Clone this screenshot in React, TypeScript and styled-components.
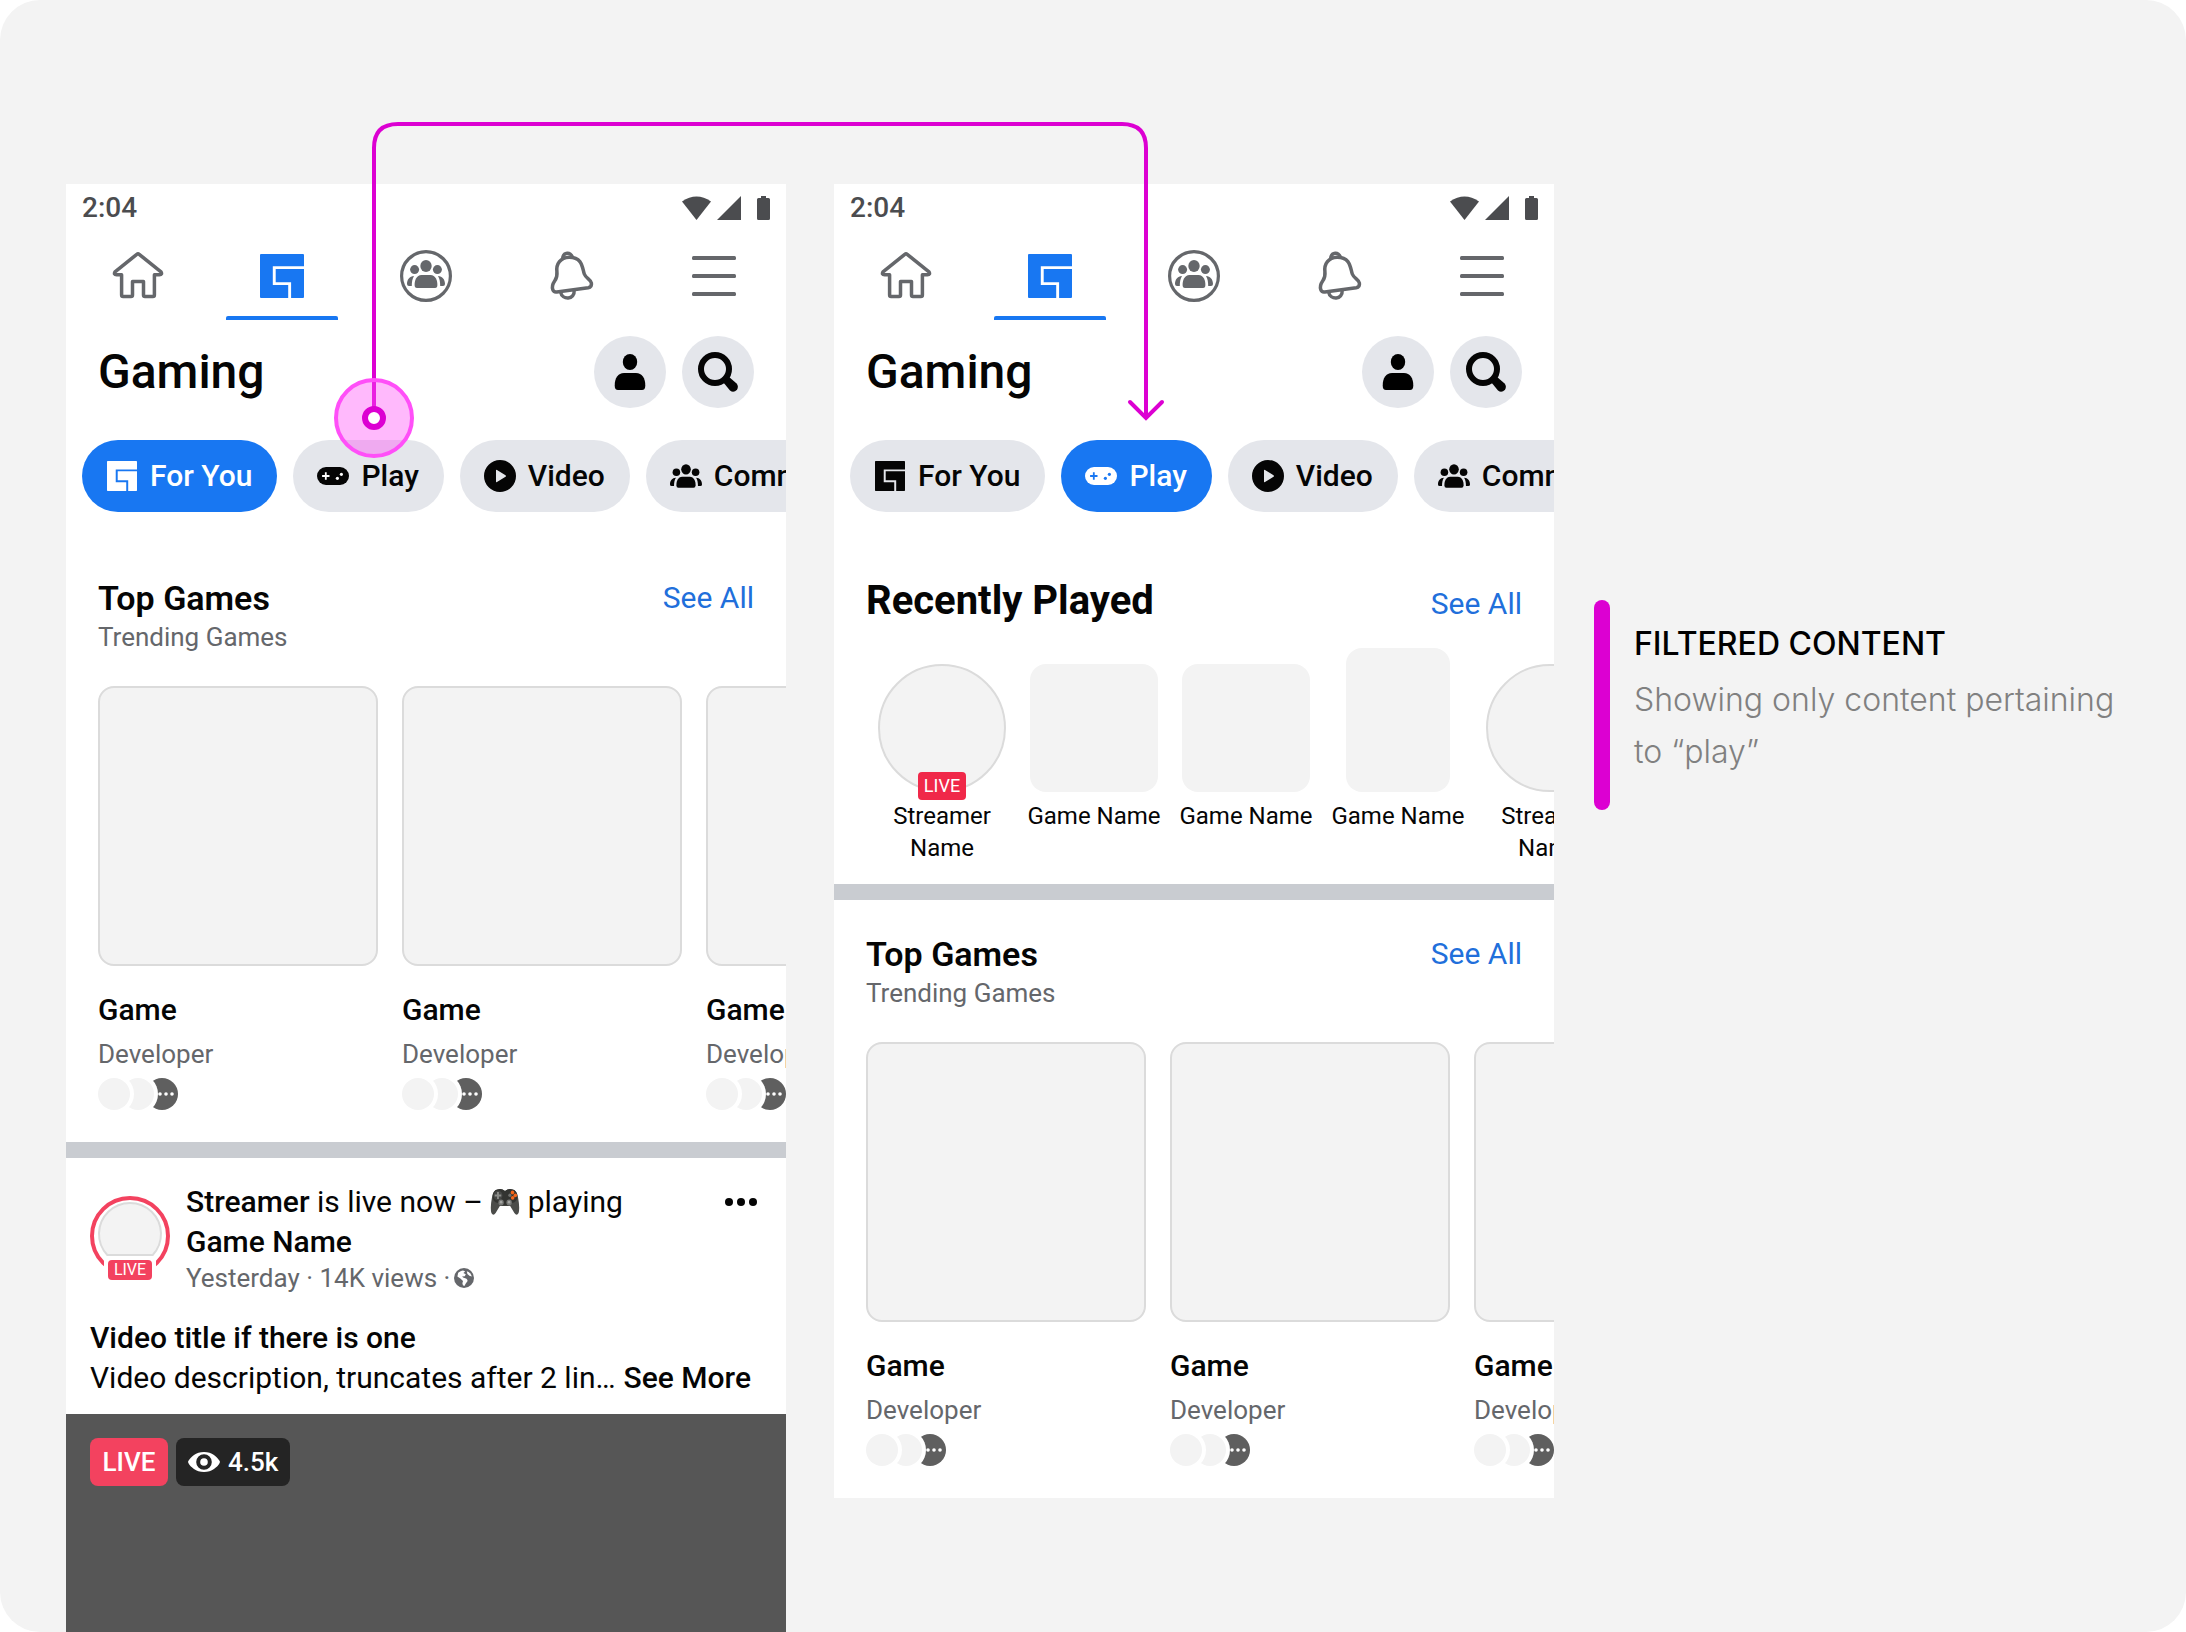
import React from "react";
import styled, { createGlobalStyle } from "styled-components";

const color = {
  board: "#f3f3f3",
  ink: "#050505",
  muted: "#65676b",
  status: "#4b4c4f",
  chip: "#e4e6eb",
  blue: "#1877f2",
  link: "#216fdb",
  live: "#f3425f",
  liveDeep: "#f02849",
  outline: "#dbdbdb",
  divider: "#c9ccd1",
  flow: "#dc00d2",
};

const Global = createGlobalStyle`
  *, *::before, *::after { box-sizing: border-box; }
  body { margin: 0; background: #ffffff; font-family: Roboto, "Liberation Sans", sans-serif; color: ${color.ink}; }
  h2, h3, h4, p, ul { margin: 0; padding: 0; }
  ul { list-style: none; }
  button { font: inherit; color: inherit; border: 0; padding: 0; background: none; cursor: pointer; }
  a { text-decoration: none; }
  svg { display: block; flex: none; }
`;

const Board = styled.main`
  position: relative;
  display: flex;
  align-items: flex-start;
  min-height: 100vh;
  padding: 184px 48px 0 66px;
  overflow: hidden;
  background: ${color.board};
  border-radius: 40px;
`;

const Phone = styled.section<{ $fill?: boolean }>`
  display: flex;
  flex-direction: column;
  flex: 0 1 720px;
  min-width: 0;
  align-self: ${(p) => (p.$fill ? "stretch" : "flex-start")};
  min-height: ${(p) => (p.$fill ? "calc(100vh - 184px)" : "0")};
  overflow: hidden;
  background: #ffffff;
  & + & { margin-left: 48px; }
`;

const StatusBar = styled.div`
  display: flex;
  align-items: center;
  justify-content: space-between;
  height: 48px;
  padding: 0 16px;
  color: ${color.status};
  font-size: 28px;
  font-weight: 500;
  line-height: 48px;
`;

const Tabs = styled.nav`
  display: grid;
  grid-template-columns: repeat(5, 1fr);
  height: 88px;
`;

const Tab = styled.button<{ $active?: boolean }>`
  display: grid;
  grid-template-rows: 84px 4px;
  justify-items: center;
  align-items: center;
  color: ${(p) => (p.$active ? color.blue : color.muted)};
  & > svg { margin-top: 4px; }
`;

const TabMarker = styled.span`
  width: 112px;
  height: 4px;
  background: ${color.blue};
  border-radius: 2px 2px 0 0;
`;

const TitleRow = styled.header`
  display: flex;
  align-items: center;
  gap: 16px;
  padding: 16px 32px;
`;

const PageTitle = styled.h2`
  flex: 1;
  font-size: 48px;
  font-weight: 500;
  line-height: 72px;
`;

const RoundButton = styled.button`
  display: grid;
  place-items: center;
  width: 72px;
  height: 72px;
  border-radius: 50%;
  background: ${color.chip};
`;

const Pills = styled.div`
  display: flex;
  gap: 16px;
  padding: 16px 16px 32px;
  overflow: hidden;
`;

const Pill = styled.button<{ $active?: boolean }>`
  display: flex;
  flex: none;
  align-items: center;
  gap: 12px;
  height: 72px;
  padding: 0 25px 0 24px;
  border-radius: 36px;
  background: ${(p) => (p.$active ? color.blue : color.chip)};
  color: ${(p) => (p.$active ? "#ffffff" : color.ink)};
  font-size: 30px;
  font-weight: 500;
  line-height: 40px;
  white-space: nowrap;
`;

const Section = styled.section`
  padding: 32px 0 32px 32px;
  overflow: hidden;
`;

const RecentSection = styled(Section)`
  padding-bottom: 20px;
`;

const SectionHead = styled.div<{ $align: string }>`
  display: flex;
  align-items: ${(p) => p.$align};
  justify-content: space-between;
  padding-right: 32px;
`;

const SectionTitle = styled.h3`
  font-size: 34px;
  font-weight: 600;
  line-height: 44px;
`;

const LargeTitle = styled(SectionTitle)`
  font-size: 40px;
  font-weight: 700;
  line-height: 50px;
`;

const SeeAll = styled.a`
  color: ${color.link};
  font-size: 30px;
  line-height: 40px;
`;

const Subtitle = styled.p`
  color: ${color.muted};
  font-size: 26px;
  line-height: 34px;
`;

const Shelf = styled.ul`
  display: flex;
  gap: 24px;
  margin-top: 32px;
`;

const GameCard = styled.li`
  flex: none;
  width: 280px;
`;

const Cover = styled.div`
  height: 280px;
  margin-bottom: 24px;
  border: 2px solid ${color.outline};
  border-radius: 16px;
  background: ${color.board};
`;

const GameName = styled.h4`
  margin-bottom: 4px;
  font-size: 30px;
  font-weight: 500;
  line-height: 40px;
`;

const Developer = styled.p`
  margin-bottom: 4px;
  color: ${color.muted};
  font-size: 26px;
  line-height: 40px;
`;

const Friends = styled.div`
  display: flex;
`;

const Friend = styled.span<{ $level: number; $dark?: boolean }>`
  z-index: ${(p) => p.$level};
  width: 32px;
  height: 32px;
  border-radius: 50%;
  background: ${(p) => (p.$dark ? "#5f5f5f" : color.board)};
  box-shadow: 0 0 0 4px #ffffff;
  & + & { margin-left: -8px; }
`;

const Divider = styled.div`
  flex: none;
  height: 16px;
  background: ${color.divider};
`;

const RecentShelf = styled.ul`
  display: flex;
  margin-top: 22px;
`;

const RecentItem = styled.li`
  display: flex;
  flex: none;
  flex-direction: column;
  align-items: center;
  width: 152px;
`;

const RecentArt = styled.div`
  position: relative;
  display: flex;
  align-items: flex-end;
  height: 144px;
  margin-bottom: 8px;
`;

const Thumb = styled.div<{ $shape: string }>`
  width: ${(p) => (p.$shape === "tall" ? 104 : 128)}px;
  height: ${(p) => (p.$shape === "tall" ? 144 : 128)}px;
  border: ${(p) => (p.$shape === "round" ? `2px solid ${color.outline}` : "0")};
  border-radius: ${(p) => (p.$shape === "round" ? "50%" : "16px")};
  background: ${color.board};
`;

const ThumbLive = styled.span`
  position: absolute;
  bottom: -8px;
  left: 50%;
  margin-left: -24px;
  width: 48px;
  border-radius: 4px;
  background: ${color.liveDeep};
  color: #ffffff;
  font-size: 18px;
  line-height: 28px;
  text-align: center;
`;

const RecentLabel = styled.p`
  min-height: 64px;
  padding: 0 8px;
  font-size: 24px;
  line-height: 32px;
  text-align: center;
`;

const PostHead = styled.div`
  display: flex;
  padding: 24px 24px 0;
`;

const Avatar = styled.div`
  position: relative;
  width: 80px;
  margin: 14px 16px 0 0;
`;

const AvatarLive = styled.span`
  position: absolute;
  top: 64px;
  left: 18px;
  width: 44px;
  border-radius: 4px;
  background: ${color.live};
  color: #ffffff;
  font-size: 16px;
  line-height: 20px;
  text-align: center;
`;

const PostInfo = styled.div`
  flex: 1;
`;

const PostText = styled.p`
  font-size: 30px;
  line-height: 40px;
  & strong { font-weight: 500; }
`;

const EmojiSlot = styled.span`
  display: inline-block;
  vertical-align: -4px;
`;

const Meta = styled.p`
  display: flex;
  align-items: center;
  gap: 4px;
  color: ${color.muted};
  font-size: 26px;
  line-height: 32px;
`;

const MoreButton = styled.button`
  display: flex;
  width: 40px;
  height: 40px;
  align-items: center;
  justify-content: flex-end;
`;

const PostBody = styled.div`
  padding: 24px 24px 16px;
`;

const Description = styled.div`
  display: flex;
  gap: 8px;
  font-size: 30px;
  line-height: 40px;
  white-space: nowrap;
`;

const SeeMore = styled.button`
  font-weight: 500;
`;

const Video = styled.div`
  display: flex;
  flex: 1;
  align-items: flex-start;
  gap: 8px;
  padding: 24px;
  background: #565656;
`;

const VideoTag = styled.span<{ $live?: boolean }>`
  display: flex;
  align-items: center;
  justify-content: center;
  gap: 8px;
  min-width: 78px;
  height: 48px;
  padding: 0 12px;
  border-radius: 8px;
  background: ${(p) => (p.$live ? color.live : "#242424")};
  color: #ffffff;
  font-size: 26px;
  font-weight: 500;
  line-height: 48px;
`;

const Note = styled.aside`
  display: flex;
  flex: 1;
  gap: 24px;
  min-width: 0;
  margin: 416px 0 0 40px;
  font-family: Inter, "Liberation Sans", sans-serif;
  font-size: 32px;
  line-height: 52px;
`;

const NoteBar = styled.span`
  flex: none;
  width: 16px;
  border-radius: 8px;
  background: ${color.flow};
`;

const NoteText = styled.div`
  padding: 18px 0 32px;
`;

const NoteTitle = styled.h3`
  margin-bottom: 4px;
  color: #000000;
  font-size: 32px;
  font-weight: 500;
`;

const NoteBody = styled.p`
  color: #808080;
  font-weight: 300;
`;

const Connector = styled.svg`
  position: absolute;
  top: 120px;
  left: 332px;
  pointer-events: none;
`;

const HomeIcon = () => (
  <svg width="52" height="52" viewBox="0 0 52 52" fill="none" stroke="currentColor" strokeWidth="3.5" strokeLinejoin="round">
    <path d="M24.8 4.3Q26 3.3 27.2 4.3L49 21.8Q50.600 24.800 47.500 24.800H42.400V45Q42.400 46.500 40.900 46.500H33Q31.500 46.500 31.500 45V31.500H20.500V45Q20.500 46.500 19 46.500H11.100Q9.600 46.500 9.600 45V24.800H4.500Q1.400 24.800 3 21.800Z" />
  </svg>
);

const GamingIcon = ({ size }: { size: number }) => (
  <svg width={size} height={size} viewBox="0 0 44 44" fill="currentColor">
    <path d="M1 0H43Q44 0 44 1V12.3H12.8V31.1H28.2V44H1Q0 44 0 43V1Q0 0 1 0Z" />
    <path d="M15.7 15.1H44V43Q44 44 43 44H31.1V28.2H15.7Z" />
  </svg>
);

const PeopleShapes = () => (
  <g fill="currentColor" stroke="none">
    <ellipse cx="26" cy="16" rx="5.7" ry="6.1" />
    <circle cx="14.6" cy="19.6" r="4.5" />
    <circle cx="37.4" cy="19.6" r="4.5" />
    <path d="M21.5 25H30.5C35.5 25.3 37.4 30 37.4 35Q37.4 38 35 38H17Q14.6 38 14.6 35C14.6 30 16.5 25.3 21.5 25Z" />
    <path d="M14 26C9.5 26.3 7 29.5 7 34Q7 36 9 36H11.8C11.8 32 12.3 28.8 14 26Z" />
    <path d="M38 26C42.5 26.3 45 29.5 45 34Q45 36 43 36H40.2C40.2 32 39.7 28.8 38 26Z" />
  </g>
);

const GroupsIcon = () => (
  <svg width="52" height="52" viewBox="0 0 52 52" fill="none" stroke="currentColor" strokeWidth="3.2">
    <circle cx="26" cy="26" r="24.4" />
    <PeopleShapes />
  </svg>
);

const CommunityIcon = () => (
  <svg width="32" height="32" viewBox="7 5 38 38">
    <PeopleShapes />
  </svg>
);

const BellIcon = () => (
  <svg width="52" height="52" viewBox="0 0 52 52" fill="none" stroke="currentColor" strokeWidth="3.5" strokeLinejoin="round">
    <path d="M25 7.2C16.5 7.5 12 14 12.9 21.5C13.3 25 13.2 27.5 10.8 30.8C8.6 34 8 37.5 8.8 39.8Q9.8 42.5 12.8 42L44.2 37.8Q48 37.2 47.4 33C46.8 29.5 42 28.5 40.3 24C38.3 18.5 38.8 7 25 7.2Z" />
    <path d="M18.6 8.8C19.2 1.8 27 1.8 28.2 7" />
    <path d="M16.6 42C18 50.2 31 50.4 30.2 40" />
  </svg>
);

const MenuIcon = () => (
  <svg width="44" height="40" viewBox="0 0 44 40" fill="currentColor">
    <rect width="44" height="4" rx="1.5" />
    <rect y="18" width="44" height="4" rx="1.5" />
    <rect y="36" width="44" height="4" rx="1.5" />
  </svg>
);

const StatusIcons = () => (
  <svg width="88" height="24" viewBox="0 0 88 24" fill="currentColor">
    <path d="M0 5.5Q14.5-4.5 29 5.5L14.5 24Z" />
    <path d="M59 0V24H35Z" />
    <path d="M79 0H84V2H86.5Q88 2 88 3.5V22.5Q88 24 86.5 24H76.5Q75 24 75 22.5V3.5Q75 2 76.5 2H79Z" />
  </svg>
);

const PersonIcon = () => (
  <svg width="48" height="48" viewBox="0 0 48 48">
    <ellipse cx="24" cy="14" rx="7.2" ry="8" />
    <path d="M18 25H30C36 25 39.3 30 39.3 37.5Q39.3 42 36 42H12Q8.7 42 8.7 37.5C8.7 30 12 25 18 25Z" />
  </svg>
);

const SearchIcon = () => (
  <svg width="48" height="48" viewBox="0 0 48 48" fill="none" stroke={color.ink}>
    <circle cx="21" cy="21" r="14" strokeWidth="6" />
    <path d="M29 34L34.5 28.5L42.6 35.6Q45 38.5 43 41.8Q39.5 45.5 36 42.5Z" fill={color.ink} stroke="none" />
  </svg>
);

const GamepadIcon = ({ cut }: { cut: string }) => (
  <svg width="32" height="32" viewBox="0 0 32 32">
    <rect y="7" width="32" height="18" rx="9" fill="currentColor" />
    <path d="M8.8 12.3V19.7M5.1 16H12.5" stroke={cut} strokeWidth="1.8" />
    <circle cx="20.4" cy="18.3" r="1.6" fill={cut} />
    <circle cx="24.4" cy="14.3" r="1.6" fill={cut} />
  </svg>
);

const PlayIcon = () => (
  <svg width="32" height="32" viewBox="0 0 32 32" fill="currentColor">
    <path
      fillRule="evenodd"
      d="M16 0A16 16 0 1 1 16 32A16 16 0 1 1 16 0ZM12 10.5V21.5Q12 22.6 13 22L21.5 16.8Q22.5 16 21.5 15.2L13 10Q12 9.4 12 10.5Z"
    />
  </svg>
);

const GamingSlot = styled.span`
  padding: 0 1px;
`;

const EllipsisDots = () => (
  <svg width="32" height="32" viewBox="0 0 32 32" fill="#ffffff">
    <circle cx="14" cy="16" r="1.8" />
    <circle cx="20" cy="16" r="1.8" />
    <circle cx="26" cy="16" r="1.8" />
  </svg>
);

const ControllerEmoji = () => (
  <svg width="30" height="28" viewBox="0 0 32 28" preserveAspectRatio="none" role="img" aria-label="video game controller">
    <path d="M8 1.5Q12 0 16 3Q20 0 24 1.5Q29 2 30 10Q32 20 30.5 25Q28.5 28.5 26 25L21.5 18H10.5L6 25Q3.5 28.5 1.5 25Q0 20 2 10Q3 2 8 1.5Z" fill="#4b4c49" />
    <path d="M8 1.5Q12 0 16 3Q20 0 24 1.5Q28.3 2 29.3 8Q29 15 23 15L20 17.5H12L9 15Q3 15 2.7 8Q3.7 2 8 1.5Z" fill="#333431" />
    <circle cx="8.5" cy="7.5" r="4.8" fill="#454644" />
    <path d="M8.5 4V11M5 7.5H12" stroke="#8a8b88" strokeWidth="2" />
    <circle cx="24" cy="4.5" r="1.9" fill="#f4661b" />
    <circle cx="27" cy="7.3" r="1.9" fill="#f4661b" />
    <circle cx="21.2" cy="7.3" r="1.7" fill="#6f706d" />
    <circle cx="24.2" cy="9.8" r="1.9" fill="#f4661b" />
    <circle cx="11.8" cy="14.5" r="2.9" fill="#777876" />
    <circle cx="20.4" cy="14.5" r="2.9" fill="#777876" />
    <circle cx="11.8" cy="14.2" r="1.4" fill="#a5a6a3" />
    <circle cx="20.4" cy="14.2" r="1.4" fill="#a5a6a3" />
  </svg>
);

const GlobeIcon = () => (
  <svg width="20" height="20" viewBox="0 0 20 20">
    <circle cx="10" cy="10" r="10" fill="currentColor" />
    <path d="M4.2 4.8Q6.5 2.6 9 2.4L11.2 3.6L9.4 5L11.8 6.2L10.8 8.2L8 8.4L9.6 9.8Q13.4 10.4 13.6 13L11.8 15.6L10.4 18Q8.4 17.6 8.4 15.2L9 13L6.4 10.6L3.4 8.4Z" fill="#ffffff" />
    <path d="M12.8 3.2Q16.8 4.6 17.8 8.4L15.4 7.8L13.4 6Z" fill="#ffffff" />
  </svg>
);

const EyeIcon = () => (
  <svg width="32" height="22" viewBox="0 0 32 22" fill="currentColor">
    <path
      fillRule="evenodd"
      d="M16 1C24 1 29.5 6.2 31.5 9.8Q32.3 11 31.5 12.2C29.500 15.800 24 21 16 21S2.500 15.800 0.500 12.200Q-0.300 11 0.500 9.800C2.500 6.200 8 1 16 1ZM16 3.200A7.800 7.800 0 1 0 16 18.800A7.800 7.800 0 1 0 16 3.200Z"
    />
    <circle cx="16" cy="11" r="3.8" />
  </svg>
);

const AvatarRing = () => (
  <svg width="80" height="84" viewBox="0 0 80 84" fill="none">
    <circle cx="40" cy="40" r="38" stroke={color.live} strokeWidth="4" />
    <path d="M17.3 59A31 31 0 1 1 62.7 59Z" fill={color.board} stroke={color.outline} strokeWidth="2" />
    <rect x="14" y="60" width="52" height="24" rx="2" fill="#ffffff" />
  </svg>
);

const Dots = () => (
  <svg width="38" height="10" viewBox="0 0 38 10" fill={color.ink}>
    <circle cx="5" cy="5" r="4" />
    <circle cx="17" cy="5" r="4" />
    <circle cx="29" cy="5" r="4" />
  </svg>
);

const PhoneHeader = ({ active }: { active: "foryou" | "play" }) => (
  <>
    <StatusBar>
      <span>2:04</span>
      <StatusIcons />
    </StatusBar>
    <Tabs aria-label="Main">
      <Tab aria-label="Home"><HomeIcon /></Tab>
      <Tab aria-label="Gaming" $active><GamingIcon size={44} /><TabMarker /></Tab>
      <Tab aria-label="Groups"><GroupsIcon /></Tab>
      <Tab aria-label="Notifications"><BellIcon /></Tab>
      <Tab aria-label="Menu"><MenuIcon /></Tab>
    </Tabs>
    <TitleRow>
      <PageTitle>Gaming</PageTitle>
      <RoundButton aria-label="Profile"><PersonIcon /></RoundButton>
      <RoundButton aria-label="Search"><SearchIcon /></RoundButton>
    </TitleRow>
    <Pills>
      <Pill $active={active === "foryou"}>
        <GamingSlot><GamingIcon size={30} /></GamingSlot>For You
      </Pill>
      <Pill $active={active === "play"}>
        <GamepadIcon cut={active === "play" ? color.blue : "#ffffff"} />Play
      </Pill>
      <Pill><PlayIcon />Video</Pill>
      <Pill><CommunityIcon />Community</Pill>
    </Pills>
  </>
);

const TopGames = () => (
  <Section>
    <SectionHead $align="center">
      <SectionTitle>Top Games</SectionTitle>
      <SeeAll href="#top-games">See All</SeeAll>
    </SectionHead>
    <Subtitle>Trending Games</Subtitle>
    <Shelf>
      {[0, 1, 2].map((i) => (
        <GameCard key={i}>
          <Cover />
          <GameName>Game</GameName>
          <Developer>Developer</Developer>
          <Friends>
            <Friend $level={3} />
            <Friend $level={2} />
            <Friend $level={1} $dark><EllipsisDots /></Friend>
          </Friends>
        </GameCard>
      ))}
    </Shelf>
  </Section>
);

const recent = [
  { label: "Streamer Name", shape: "round", live: true },
  { label: "Game Name", shape: "square" },
  { label: "Game Name", shape: "square" },
  { label: "Game Name", shape: "tall" },
  { label: "Streamer Name", shape: "round" },
];

const RecentlyPlayed = () => (
  <RecentSection>
    <SectionHead $align="baseline">
      <LargeTitle>Recently Played</LargeTitle>
      <SeeAll href="#recent">See All</SeeAll>
    </SectionHead>
    <RecentShelf>
      {recent.map((item, i) => (
        <RecentItem key={i}>
          <RecentArt>
            <Thumb $shape={item.shape} />
            {item.live && <ThumbLive>LIVE</ThumbLive>}
          </RecentArt>
          <RecentLabel>{item.label}</RecentLabel>
        </RecentItem>
      ))}
    </RecentShelf>
  </RecentSection>
);

const LivePost = () => (
  <>
    <PostHead>
      <Avatar>
        <AvatarRing />
        <AvatarLive>LIVE</AvatarLive>
      </Avatar>
      <PostInfo>
        <PostText>
          <strong>Streamer</strong> is live now – <EmojiSlot><ControllerEmoji /></EmojiSlot> playing
          <br />
          <strong>Game Name</strong>
        </PostText>
        <Meta>Yesterday · 14K views · <GlobeIcon /></Meta>
      </PostInfo>
      <MoreButton aria-label="More options"><Dots /></MoreButton>
    </PostHead>
    <PostBody>
      <PostText><strong>Video title if there is one</strong></PostText>
      <Description>
        <span>Video description, truncates after 2 lin…</span>
        <SeeMore>See More</SeeMore>
      </Description>
    </PostBody>
    <Video>
      <VideoTag $live>LIVE</VideoTag>
      <VideoTag><EyeIcon />4.5k</VideoTag>
    </Video>
  </>
);

export default function App() {
  return (
    <>
      <Global />
      <Board>
        <Phone $fill aria-label="For You feed">
          <PhoneHeader active="foryou" />
          <TopGames />
          <Divider />
          <LivePost />
        </Phone>
        <Phone aria-label="Play feed">
          <PhoneHeader active="play" />
          <RecentlyPlayed />
          <Divider />
          <TopGames />
        </Phone>
        <Note>
          <NoteBar />
          <NoteText>
            <NoteTitle>FILTERED CONTENT</NoteTitle>
            <NoteBody>Showing only content pertaining to “play”</NoteBody>
          </NoteText>
        </Note>
        <Connector width="840" height="340" viewBox="0 0 840 340" fill="none" aria-hidden="true">
          <path d="M42 298V28Q42 4 66 4H790Q814 4 814 28V298" stroke={color.flow} strokeWidth="4" />
          <path d="M798 282L814 298L830 282" stroke={color.flow} strokeWidth="4" strokeLinecap="round" />
          <circle cx="42" cy="298" r="38" fill="#ff4ff8" fillOpacity="0.4" stroke="#ff4ff8" strokeWidth="4" />
          <circle cx="42" cy="298" r="9" fill="#ffffff" stroke={color.flow} strokeWidth="6" />
        </Connector>
      </Board>
    </>
  );
}
